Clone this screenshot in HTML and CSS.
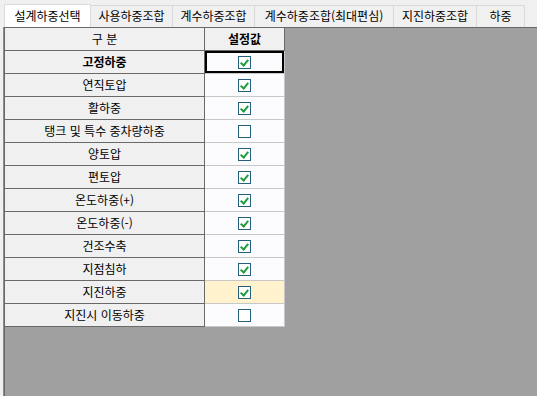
FILE: index.html
```html
<!DOCTYPE html>
<html lang="ko">
<head>
    <meta charset="UTF-8">
    <title>설계하중선택</title>
    <link rel="stylesheet" href="styles.css">
</head>
<body>
    <div class="tabs">
        <div class="tab active" style="width: 87px">설계하중선택</div>
        <div class="tab" style="width: 83px">사용하중조합</div>
        <div class="tab" style="width: 83px">계수하중조합</div>
        <div class="tab" style="width: 140px">계수하중조합(최대편심)</div>
        <div class="tab" style="width: 84px">지진하중조합</div>
        <div class="tab" style="width: 49px">하중</div>
    </div>

    <div class="panel">
        <div class="view">
            <div class="grid">
                <div class="col-head">구 분</div>
                <div class="col-head bold">설정값</div>

                <div class="row-head bold">고정하중</div>
                <div class="cell current"><span class="check on"></span></div>

                <div class="row-head">연직토압</div>
                <div class="cell"><span class="check on"></span></div>

                <div class="row-head">활하중</div>
                <div class="cell"><span class="check on"></span></div>

                <div class="row-head">탱크 및 특수 중차량하중</div>
                <div class="cell"><span class="check"></span></div>

                <div class="row-head">양토압</div>
                <div class="cell"><span class="check on"></span></div>

                <div class="row-head">편토압</div>
                <div class="cell"><span class="check on"></span></div>

                <div class="row-head">온도하중(+)</div>
                <div class="cell"><span class="check on"></span></div>

                <div class="row-head">온도하중(-)</div>
                <div class="cell"><span class="check on"></span></div>

                <div class="row-head">건조수축</div>
                <div class="cell"><span class="check on"></span></div>

                <div class="row-head">지점침하</div>
                <div class="cell"><span class="check on"></span></div>

                <div class="row-head">지진하중</div>
                <div class="cell selected"><span class="check on"></span></div>

                <div class="row-head">지진시 이동하중</div>
                <div class="cell"><span class="check"></span></div>
            </div>
        </div>
    </div>
</body>
</html>
```

FILE: styles.css
```css
html, body {
    height: 100%;
}

body {
    margin: 0;
    background-color: #f0f0f0;
    font-family: "Noto Sans CJK KR", "DejaVu Sans", sans-serif;
    font-size: 12px;
    color: #000;
    display: flex;
    flex-direction: column;
    overflow: hidden;
}

/* Tab strip */
.tabs {
    height: 27px;
    display: flex;
    align-items: flex-end;
    padding-left: 4px;
    box-sizing: border-box;
}

.tab {
    height: 22px;
    box-sizing: border-box;
    border: 1px solid #d9d9d9;
    border-bottom: none;
    margin-left: -1px;
    background: #f0f0f0;
    display: flex;
    align-items: center;
    justify-content: center;
    line-height: 1;
    padding-bottom: 1px;
}

.tab:first-child {
    margin-left: 0;
}

.tab.active {
    height: 23px;
    background: #ffffff;
    border-color: #dcdcdc;
    position: relative;
    z-index: 1;
}

/* Grid area */
.panel {
    flex: 1;
    margin-left: 3px;
    border-left: 1px solid #8c8c8c;
}

.view {
    height: 100%;
    background: #a0a0a0;
    border-top: 1px solid #696969;
    border-left: 1px solid #696969;
    box-sizing: border-box;
}

.grid {
    display: grid;
    grid-template-columns: 200px 80px;
    grid-auto-rows: 23px;
    width: 280px;
}

.col-head,
.row-head,
.cell {
    box-sizing: border-box;
    display: flex;
    align-items: center;
    justify-content: center;
    border-right: 1px solid #696969;
    border-bottom: 1px solid #696969;
    background: #f0f0f0;
    line-height: 1;
    padding-bottom: 1px;
}

.bold {
    font-weight: bold;
}

.cell {
    background: #fcfcff;
    border-right-color: #c8c8c8;
    border-bottom-color: #c8c8c8;
    padding-bottom: 0;
}

.cell.current {
    box-shadow: inset 0 0 0 2px #000;
}

.cell.selected {
    background: #fff2cc;
}

/* Checkboxes */
.check {
    width: 13px;
    height: 13px;
    box-sizing: border-box;
    border: 1px solid #245f7c;
    background: #ffffff;
    position: relative;
}

.check.on::after {
    content: "";
    position: absolute;
    left: 3px;
    top: 1px;
    width: 3px;
    height: 6px;
    border-right: 2px solid #1f9d3e;
    border-bottom: 2px solid #1f9d3e;
    transform: rotate(40deg);
}
```
